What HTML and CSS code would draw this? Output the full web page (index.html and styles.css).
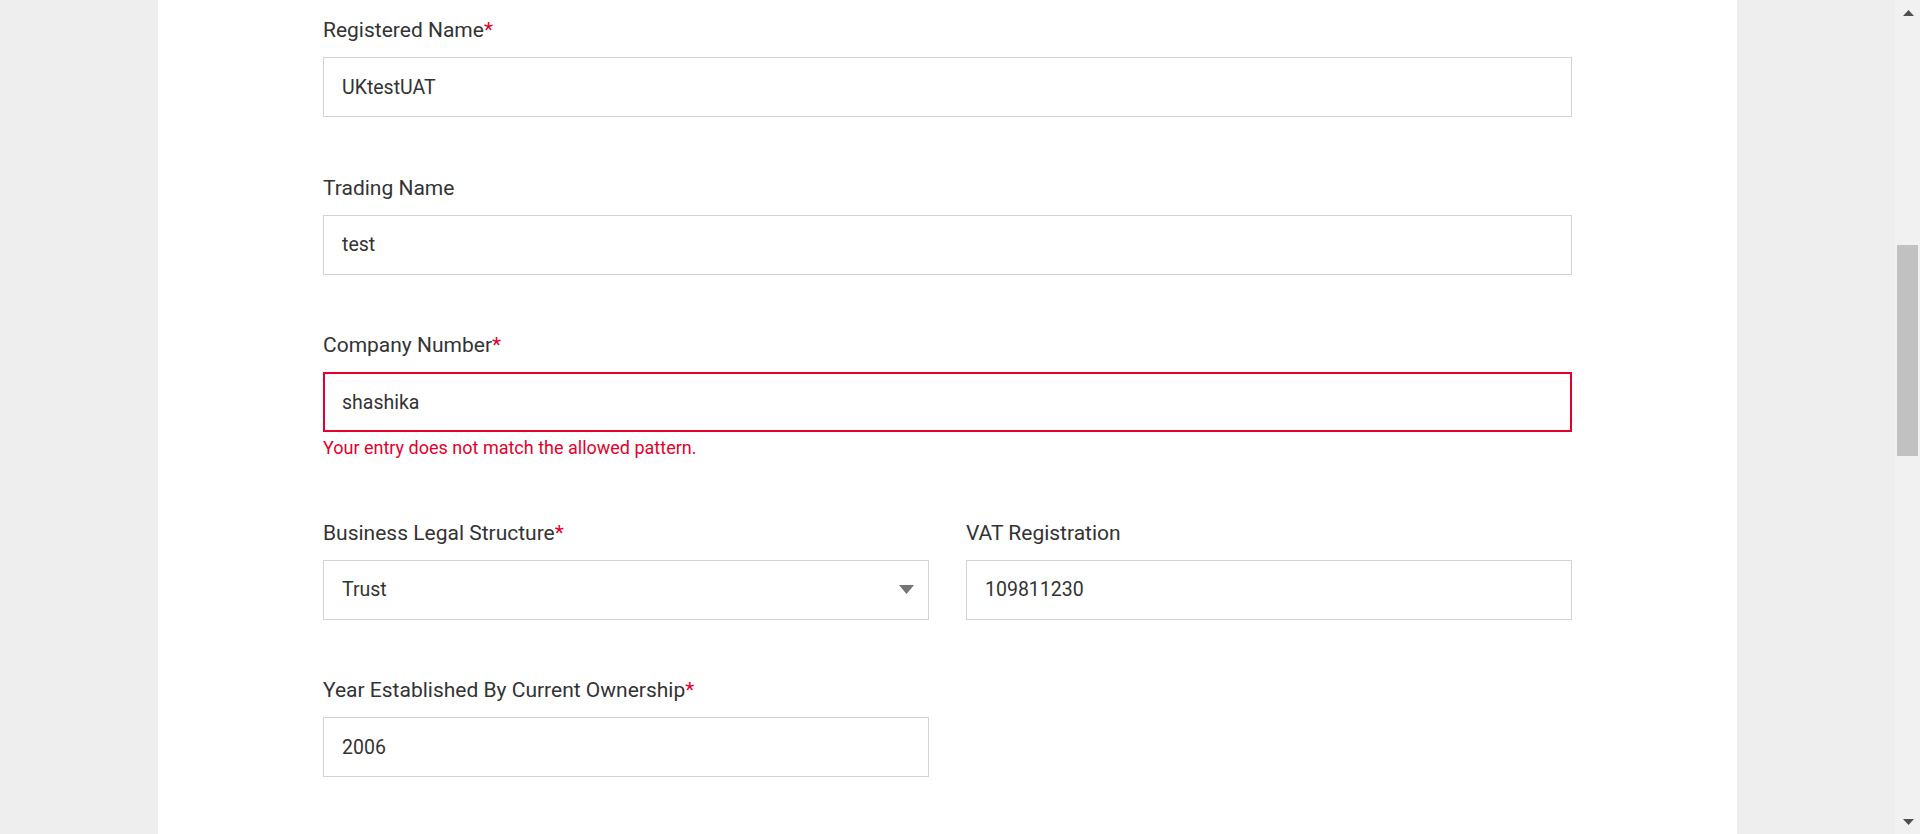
FILE: index.html
```html
<!DOCTYPE html>
<html lang="en">
<head>
<meta charset="utf-8">
<title>Company Details</title>
<link rel="stylesheet" href="styles.css">
</head>
<body>
<div class="viewport">
  <main class="page">
    <section class="panel">
      <form class="form">
        <div class="field">
          <label class="label">Registered Name<span class="req">*</span></label>
          <input class="control" type="text" value="UKtestUAT">
        </div>
        <div class="field">
          <label class="label">Trading Name</label>
          <input class="control" type="text" value="test">
        </div>
        <div class="field">
          <label class="label">Company Number<span class="req">*</span></label>
          <input class="control control-error" type="text" value="shashika">
          <div class="error">Your entry does not match the allowed pattern.</div>
        </div>
        <div class="row">
          <div class="field">
            <label class="label">Business Legal Structure<span class="req">*</span></label>
            <div class="control select">
              <span>Trust</span>
              <svg class="caret" width="15" height="9" viewBox="0 0 15 9"><path d="M0 0H15L7.5 9Z" fill="#757575"/></svg>
            </div>
          </div>
          <div class="field">
            <label class="label">VAT Registration</label>
            <input class="control" type="text" value="109811230">
          </div>
        </div>
        <div class="row">
          <div class="field">
            <label class="label">Year Established By Current Ownership<span class="req">*</span></label>
            <input class="control" type="text" value="2006">
          </div>
          <div></div>
        </div>
      </form>
    </section>
  </main>
  <div class="scrollbar">
    <div class="sb-btn"><svg width="11" height="6" viewBox="0 0 11 6"><path d="M5.5 0L11 6H0Z" fill="#505050"/></svg></div>
    <div class="sb-track"><div class="sb-thumb"></div></div>
    <div class="sb-btn"><svg width="11" height="6" viewBox="0 0 11 6"><path d="M0 0H11L5.5 6Z" fill="#505050"/></svg></div>
  </div>
</div>
</body>
</html>
```

FILE: styles.css
```css
* { box-sizing: border-box; }
html, body {
  margin: 0;
  padding: 0;
  height: 834px;
  overflow: hidden;
  background: #eeeeee;
  font-family: Roboto, "Liberation Sans", Arial, sans-serif;
  color: #333333;
}
.viewport {
  display: flex;
  height: 834px;
}
.page {
  flex: 1;
  display: flex;
  justify-content: center;
  overflow: hidden;
}
.panel {
  width: 1579px;
  background: #ffffff;
  padding: 18px 165px 0 165px;
  height: 834px;
}
.form {
  display: flex;
  flex-direction: column;
}
.field {
  display: flex;
  flex-direction: column;
  margin-bottom: 58.5px;
}
.row {
  display: grid;
  grid-template-columns: 1fr 1fr;
  column-gap: 37px;
}
.label {
  font-size: 21px;
  line-height: 24px;
  margin-bottom: 15px;
  color: #333333;
}
.req {
  color: #e4002b;
}
.control {
  height: 60px;
  width: 100%;
  border: 1px solid #d3d3d3;
  border-radius: 0;
  background: #ffffff;
  padding: 0 18px;
  font-family: Roboto, "Liberation Sans", Arial, sans-serif;
  font-size: 19.5px;
  color: #333333;
  outline: none;
  margin: 0;
}
.control-error {
  border: 2px solid #e4002b;
  padding: 0 17px;
}
.error {
  color: #e4002b;
  font-size: 18px;
  line-height: 20px;
  margin-top: 5.5px;
  margin-bottom: 4.5px;
}
.select {
  display: flex;
  align-items: center;
  justify-content: space-between;
  padding-right: 14px;
}
.caret {
  display: block;
}
.scrollbar {
  width: 25px;
  display: flex;
  flex-direction: column;
  background: #f1f1f1;
}
.sb-btn {
  height: 25px;
  display: flex;
  align-items: center;
  justify-content: center;
  padding-left: 1px;
}
.sb-track {
  flex: 1;
  padding: 220px 2px 0 2px;
}
.sb-thumb {
  height: 211px;
  background: #c1c1c1;
}
```
